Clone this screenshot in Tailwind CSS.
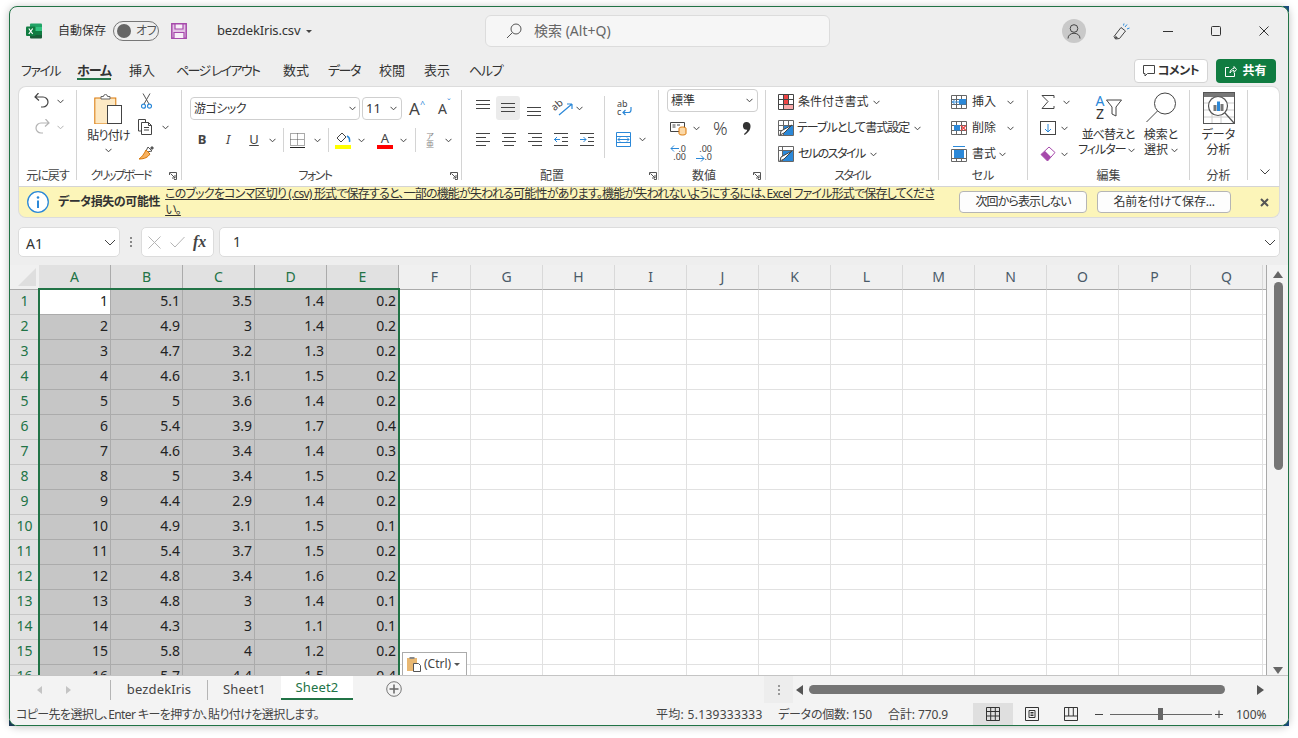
<!DOCTYPE html>
<html lang="ja">
<head>
<meta charset="UTF-8">
<title>bezdekIris.csv - Excel</title>
<script src="https://cdn.jsdelivr.net/npm/@tailwindcss/browser@4"></script>
</head>
<body class="relative w-[1298px] h-[738px] overflow-hidden bg-white text-[#333] text-xs [font-family:'Noto_Sans','Noto_Sans_CJK_JP',sans-serif] [font-feature-settings:'palt']">

<!-- shared small icons -->
<svg class="hidden">
  <symbol id="chev" viewBox="0 0 7 5"><path d="M.5.8 3.500 3.800 6.500.8" fill="none" stroke="#444" stroke-width="1"/></symbol>
  <symbol id="launch" viewBox="0 0 8 8"><path d="M.5 3V.5h7v7H5M1.500 1.500 6 6M6 3v3H3" fill="none" stroke="#555"/></symbol>
</svg>

<!-- wallpaper showing in the window corners -->
<div class="absolute left-[1283px] top-[6px] w-[6px] h-[6px] bg-[#1c4f86]"></div>
<div class="absolute left-[9px] top-[720px] w-[6px] h-[6px] bg-[#1c3f5f]"></div>
<div class="absolute left-[1283px] top-[720px] w-[6px] h-[6px] bg-[#1c4f86]"></div>

<div class="relative ml-[9px] mt-[6px] w-[1280px] h-[720px] border border-[#217346] rounded-lg overflow-hidden bg-[#eeeeee] flex flex-col shadow-[0_1px_8px_rgba(0,0,0,0.25)]">

  <!-- title bar -->
  <div class="h-[48px] shrink-0 flex items-center">
    <div class="w-[475px] shrink-0 flex items-center pl-[16px]">
      <svg class="w-[16px] h-[16px] shrink-0" viewBox="0 0 16 16">
        <path d="M5 .5h10a1 1 0 0 1 1 1V4H4V1.500a1 1 0 0 1 1-1z" fill="#21a366"/>
        <rect x="4" y="4" width="12" height="4" fill="#33c481"/>
        <rect x="4" y="8" width="12" height="4" fill="#107c41"/>
        <path d="M4 12h12v2.500a1 1 0 0 1-1 1H5a1 1 0 0 1-1-1z" fill="#185c37"/>
        <rect x="0" y="3.500" width="9.500" height="9.500" rx="1" fill="#107c41"/>
        <path d="M2.800 5.500 6.700 11M6.700 5.500 2.800 11" stroke="#fff" stroke-width="1.200"/>
      </svg>
      <span class="ml-[16px] text-[#333] whitespace-nowrap">自動保存</span>
      <div class="ml-[7px] w-[46px] h-[20px] rounded-full border border-[#777] flex items-center pl-[3px] shrink-0">
        <div class="w-[14px] h-[14px] rounded-full bg-[#666]"></div>
        <span class="ml-[5px] text-[#555] tracking-[-0.5px]">オフ</span>
      </div>
      <svg class="ml-[12px] w-[16px] h-[16px] shrink-0" viewBox="0 0 16 16">
        <path d="M.8.8h14.400v14.400H.8z" fill="#e4c3e6" stroke="#a64aab" stroke-width="1.500"/>
        <path d="M4 1h8v5H4zM3 15v-5.500h10V15" fill="#f8eff8" stroke="#a64aab" stroke-width="1.200"/>
      </svg>
      <span class="ml-[30px] text-[13px] text-[#333] whitespace-nowrap tracking-[-0.15px]">bezdekIris.csv</span>
      <div class="ml-[6px] w-0 h-0 border-x-[3px] border-x-transparent border-t-[3px] border-t-[#444]"></div>
    </div>
    <div class="w-[345px] h-[32px] shrink-0 bg-[#f6f6f6] border border-[#dcdcdc] rounded-md flex items-center pl-[20px]">
      <svg class="w-[16px] h-[16px] shrink-0" viewBox="0 0 16 16"><circle cx="10" cy="6" r="5" fill="none" stroke="#555"/><path d="M6.300 9.700 1 15" stroke="#555"/></svg>
      <span class="ml-[12px] text-sm text-[#666]">検索 (Alt+Q)</span>
    </div>
    <div class="ml-[232px] w-[24px] h-[24px] shrink-0 rounded-full bg-[#c9c9c9] flex items-center justify-center">
      <svg class="w-[14px] h-[15px]" viewBox="0 0 14 15"><circle cx="7" cy="4.500" r="3.800" fill="none" stroke="#444"/><path d="M1 14.500c0-7 12-7 12 0" fill="none" stroke="#444"/></svg>
    </div>
    <svg class="ml-[27px] w-[17px] h-[17px] shrink-0" viewBox="0 0 17 17">
      <path d="M1 13.500 8 4.500l4.500 3.500-6 7.500-4 .5z" fill="none" stroke="#444"/>
      <path d="M2 16 5 15 2.500 12.500z" fill="#444"/>
      <path d="M12 4 14 1.500M14 6l2.500-1M10.500 2.500 11 .5" stroke="#2b88d8"/>
    </svg>
    <svg class="ml-[33px] w-[10px] h-[10px] shrink-0" viewBox="0 0 10 10"><path d="M0 5.500h10" stroke="#333"/></svg>
    <svg class="ml-[38px] w-[10px] h-[10px] shrink-0" viewBox="0 0 10 10"><rect x=".5" y=".5" width="9" height="9" rx="1" fill="none" stroke="#333"/></svg>
    <svg class="ml-[38px] w-[10px] h-[10px] shrink-0" viewBox="0 0 10 10"><path d="M.5.500l9 9M9.500.500l-9 9" stroke="#333"/></svg>
  </div>

  <!-- ribbon tabs -->
  <div class="h-[31px] shrink-0 flex items-center pl-[11px] pr-[12px] text-[13px] text-[#333] whitespace-nowrap">
    <div class="w-[56px] shrink-0 tracking-[-1.5px]">ファイル</div>
    <div class="w-[52px] shrink-0 font-bold tracking-[-1px]"><span class="relative">ホーム<span class="absolute left-0 right-0 top-[17px] h-[2px] bg-[#217346]"></span></span></div>
    <div class="w-[47px] shrink-0">挿入</div>
    <div class="w-[107px] shrink-0 tracking-[-1.7px]">ページ レイアウト</div>
    <div class="w-[45px] shrink-0">数式</div>
    <div class="w-[51px] shrink-0 tracking-[-1.5px]">データ</div>
    <div class="w-[45px] shrink-0">校閲</div>
    <div class="w-[45px] shrink-0">表示</div>
    <div class="shrink-0 tracking-[-1.3px]">ヘルプ</div>
    <div class="ml-auto w-[74px] h-[24px] bg-white border border-[#d4d4d4] rounded-[4px] flex items-center justify-center font-bold text-xs text-[#333] tracking-[-0.5px]">
      <svg class="w-[12px] h-[12px] mr-[3px]" viewBox="0 0 12 12"><path d="M.5.500h11v8H4.500L2 11V8.500H.5z" fill="none" stroke="#444"/></svg>コメント
    </div>
    <div class="ml-[8px] w-[60px] h-[24px] bg-[#107c41] rounded-[4px] flex items-center justify-center font-bold text-xs text-white">
      <svg class="w-[12px] h-[12px] mr-[5px]" viewBox="0 0 12 12"><path d="M4 2.500H.5v9h9V8M5 8c0-3 2-4.500 4-4.500V1.500l2.500 3-2.500 3V5.500C7 5.500 6 6.500 5 8z" fill="none" stroke="#fff"/></svg>共有
    </div>
  </div>

  <!-- ribbon -->
  <div class="mx-[8px] w-[1262px] h-[100px] shrink-0 bg-white border-x border-t border-[#dcdcdc] rounded-t-lg flex items-start pt-[3px] text-[#333]">

    <!-- undo -->
    <div class="w-[58px] h-[90px] shrink-0 border-r border-[#d4d4d4] flex flex-col">
      <div class="h-[78px] shrink-0 pt-[3px] pl-[15px]">
        <div class="h-[16px] flex items-center">
          <svg class="w-[16px] h-[16px]" viewBox="0 0 16 16"><path d="M4.500 1 1 5l4 3.500M1.500 5H9a5 5 0 0 1 0 10H7" fill="none" stroke="#444" stroke-width="1.200" transform="translate(0 -1)"/></svg>
          <svg class="ml-[7px] w-[7px] h-[5px]"><use href="#chev"/></svg>
        </div>
        <div class="mt-[10px] h-[16px] flex items-center opacity-40">
          <svg class="w-[16px] h-[16px]" viewBox="0 0 16 16"><path d="M11.500 1 15 5l-4 3.500M14.500 5H7a5 5 0 0 0 0 10h2" fill="none" stroke="#444" stroke-width="1.200" transform="translate(0 -1)"/></svg>
          <svg class="ml-[7px] w-[7px] h-[5px]"><use href="#chev"/></svg>
        </div>
      </div>
      <div class="h-[14px] mt-[1px] leading-[14px] text-center whitespace-nowrap text-[#444] tracking-[-1px]">元に戻す</div>
    </div>

    <!-- clipboard -->
    <div class="w-[105px] h-[90px] shrink-0 border-r border-[#d4d4d4] flex flex-col">
      <div class="h-[78px] shrink-0 flex pl-[9px]">
        <div class="w-[45px] shrink-0 flex flex-col items-center pt-[4px]">
          <svg class="w-[30px] h-[30px]" viewBox="0 0 30 30">
            <rect x=".8" y="4" width="21" height="26" fill="#fde9c4" stroke="#d97706"/>
            <path d="M7 5V2.500h2.500a2 2 0 0 1 4 0H16V5z" fill="#fff" stroke="#666"/>
            <rect x="13.500" y="11.500" width="14" height="18" fill="#fff" stroke="#444"/>
          </svg>
          <div class="mt-[4px] whitespace-nowrap tracking-[-0.8px]">貼り付け</div>
          <svg class="mt-[4px] w-[7px] h-[5px]"><use href="#chev"/></svg>
        </div>
        <div class="ml-[7px] shrink-0">
          <svg class="mt-[3px] ml-[3px] w-[11px] h-[16px] block" viewBox="0 0 11 16"><path d="M2 .5 8 11M9 .5 3 11" stroke="#555"/><circle cx="2.500" cy="13.200" r="2" fill="none" stroke="#2b88d8" stroke-width="1.200"/><circle cx="8.500" cy="13.200" r="2" fill="none" stroke="#2b88d8" stroke-width="1.200"/></svg>
          <div class="mt-[10px] flex items-center">
            <svg class="w-[16px] h-[16px] block" viewBox="0 0 16 16"><path d="M3.500 12H.5V.5h7V3M3.500 3.500h7l3 3v9h-10z M10.500 3.500v3h3M6 8.500h5M6 11h5" fill="#fff" stroke="#444"/></svg>
            <svg class="ml-[8px] w-[7px] h-[5px]"><use href="#chev"/></svg>
          </div>
          <svg class="mt-[10px] w-[17px] h-[16px] block" viewBox="0 0 17 16"><path d="M10 2l4 4-5 1-1-1z" fill="#fff" stroke="#555"/><path d="M12 3l2-2 2 2-2 2z" fill="#555"/><path d="M8 5l4 4c-2 3-5 5-11 5 3-2 5-5 7-9z" fill="#f7b15f" stroke="#d97706"/></svg>
        </div>
      </div>
      <div class="h-[14px] mt-[1px] leading-[14px] text-center whitespace-nowrap text-[#444] relative pr-[17px] tracking-[-2px]">クリップボード
        <svg class="absolute right-[4px] top-[3px] w-[8px] h-[8px]"><use href="#launch"/></svg>
      </div>
    </div>

    <!-- font -->
    <div class="w-[280px] h-[90px] shrink-0 border-r border-[#d4d4d4] flex flex-col">
      <div class="h-[78px] shrink-0 pl-[8px] pt-[7px]">
        <div class="flex items-center h-[23px]">
          <div class="w-[170px] h-[23px] border border-[#cfcfcf] rounded-[4px] flex items-center pl-[3px] pr-[3px] justify-between">
            <span class="tracking-[-0.5px]">游ゴシック</span><svg class="w-[7px] h-[5px]"><use href="#chev"/></svg>
          </div>
          <div class="ml-[2px] w-[40px] h-[23px] border border-[#cfcfcf] rounded-[4px] flex items-center pl-[3px] pr-[4px] justify-between">
            <span class="text-[13px]">11</span><svg class="w-[7px] h-[5px]"><use href="#chev"/></svg>
          </div>
          <span class="ml-[7px] text-[17px] leading-none text-[#444] relative">A<span class="absolute left-[11px] top-[-1px] text-[9px] text-[#2b88d8]">^</span></span>
          <span class="ml-[18px] text-[14px] leading-none text-[#444] relative">A<span class="absolute left-[9px] top-[-4px] text-[9px] text-[#2b88d8]">ˇ</span></span>
        </div>
        <div class="mt-[10px] flex items-center h-[20px] -ml-[1px] text-[#444]">
          <span class="w-[26px] text-center font-bold text-[13px]">B</span>
          <span class="w-[26px] text-center italic text-[13px]">I</span>
          <span class="w-[26px] text-center underline text-[13px]">U</span>
          <svg class="w-[7px] h-[5px] ml-[2px]"><use href="#chev"/></svg>
          <div class="ml-[7px] w-px h-[24px] bg-[#d4d4d4]"></div>
          <svg class="ml-[6px] w-[15px] h-[15px]" viewBox="0 0 15 15"><path d="M.5.500h14v12H.5zM7.500.500v12M.5 6.500h14" fill="none" stroke="#555" stroke-dasharray="1 1"/><path d="M0 14.500h15" stroke="#222"/></svg>
          <svg class="w-[7px] h-[5px] ml-[9px]"><use href="#chev"/></svg>
          <div class="ml-[7px] w-px h-[24px] bg-[#d4d4d4]"></div>
          <svg class="ml-[6px] w-[16px] h-[17px]" viewBox="0 0 16 17"><path d="M7 1 2 6l4 4 5-5z" fill="#fff" stroke="#444"/><path d="M12 4c2 1 3 3 2.500 6" fill="none" stroke="#2b88d8" stroke-width="1.500"/><rect y="13" width="16" height="4" fill="#ffff00"/></svg>
          <svg class="w-[7px] h-[5px] ml-[7px]"><use href="#chev"/></svg>
          <div class="ml-[12px] w-[16px] h-[17px] flex flex-col items-center">
            <span class="leading-[13px] text-[13px]">A</span>
            <div class="w-[16px] h-[4px] bg-[#ff0000]"></div>
          </div>
          <svg class="w-[7px] h-[5px] ml-[7px]"><use href="#chev"/></svg>
          <div class="ml-[8px] w-px h-[24px] bg-[#d4d4d4]"></div>
          <div class="ml-[9px] w-[10px] text-center text-[8px] leading-[8px] text-[#888]">ア<br>亜</div>
          <svg class="w-[7px] h-[5px] ml-[10px]"><use href="#chev"/></svg>
        </div>
      </div>
      <div class="h-[14px] mt-[1px] leading-[14px] text-center whitespace-nowrap text-[#444] relative pr-[13px] tracking-[-1.5px]">フォント
        <svg class="absolute right-[3px] top-[3px] w-[8px] h-[8px]"><use href="#launch"/></svg>
      </div>
    </div>

    <!-- alignment -->
    <div class="w-[197px] h-[90px] shrink-0 border-r border-[#d4d4d4] flex flex-col">
      <div class="h-[78px] shrink-0 flex pl-[8px] pt-[6px]">
        <div class="w-[134px] shrink-0">
          <div class="flex items-center h-[24px]">
            <div class="w-[26px] h-[24px] flex justify-center">
              <svg class="w-[14px] h-[14px] mt-[4px]" viewBox="0 0 14 14"><path d="M0 .5h14M0 4.500h14M0 8.500h14" stroke="#444"/></svg>
            </div>
            <div class="w-[24px] h-[24px] flex justify-center rounded-[3px] bg-[#ebebeb]">
              <svg class="w-[14px] h-[14px] mt-[7px]" viewBox="0 0 14 14"><path d="M0 .5h14M0 4.500h14M0 8.500h14" stroke="#444"/></svg>
            </div>
            <div class="w-[28px] h-[24px] flex justify-center">
              <svg class="w-[14px] h-[14px] mt-[11px]" viewBox="0 0 14 14"><path d="M0 .5h14M0 4.500h14M0 8.500h14" stroke="#444"/></svg>
            </div>
            <svg class="ml-[5px] w-[20px] h-[16px] overflow-visible" viewBox="0 0 20 16"><path d="M6 15 19 4M19 4h-5M19 4v5" fill="none" stroke="#2b88d8" stroke-width="1.200"/><text x="0" y="9" font-size="10" fill="#444" transform="rotate(-40 4 8)">ab</text></svg>
            <svg class="ml-[3px] w-[7px] h-[5px]"><use href="#chev"/></svg>
          </div>
          <div class="mt-[8px] flex items-center h-[24px] pl-[6px] gap-[12px]">
            <svg class="w-[14px] h-[14px]" viewBox="0 0 14 14"><path d="M0 .5h14M0 4.500h10M0 8.500h14M0 12.500h10" stroke="#444"/></svg>
            <svg class="w-[14px] h-[14px]" viewBox="0 0 14 14"><path d="M0 .5h14M2 4.500h10M0 8.500h14M2 12.500h10" stroke="#444"/></svg>
            <svg class="w-[14px] h-[14px]" viewBox="0 0 14 14"><path d="M0 .5h14M4 4.500h10M0 8.500h14M4 12.500h10" stroke="#444"/></svg>
            <svg class="w-[14px] h-[14px]" viewBox="0 0 14 14"><path d="M0 .5h14M8 4.500h6M8 8.500h6M0 12.500h14" stroke="#444"/><path d="M6 6.500H0M3 4 .5 6.500 3 9" fill="none" stroke="#2b88d8"/></svg>
            <svg class="w-[14px] h-[14px]" viewBox="0 0 14 14"><path d="M0 .5h14M8 4.500h6M8 8.500h6M0 12.500h14" stroke="#444"/><path d="M0 6.500h6M3.500 4 6 6.500 3.500 9" fill="none" stroke="#2b88d8"/></svg>
          </div>
        </div>
        <div class="w-px h-[62px] bg-[#d4d4d4] shrink-0"></div>
        <div class="ml-[11px]">
          <svg class="mt-[3px] ml-[1px] w-[15px] h-[18px] block overflow-visible" viewBox="0 0 15 18"><text x="0" y="8" font-size="9" fill="#444">ab</text><text x="0" y="16" font-size="9" fill="#444">c</text><path d="M14 8v3a2.500 2.500 0 0 1-2.500 2.500H6M8.500 11 6 13.500 8.500 16" fill="none" stroke="#2b88d8" stroke-width="1.200"/></svg>
          <div class="mt-[15px] flex items-center">
            <svg class="w-[15px] h-[15px]" viewBox="0 0 15 15"><path d="M.5.500h14v14H.5zM.5 4.500h14M.5 10.500h14" fill="none" stroke="#2b88d8"/><path d="M2 7.500h11M4 5.500l-2 2 2 2M11 5.500l2 2-2 2" fill="none" stroke="#2b88d8"/></svg>
            <svg class="ml-[8px] w-[7px] h-[5px]"><use href="#chev"/></svg>
          </div>
        </div>
      </div>
      <div class="h-[14px] mt-[1px] leading-[14px] text-center whitespace-nowrap text-[#444] relative pr-[16px]">配置
        <svg class="absolute right-[1px] top-[3px] w-[8px] h-[8px]"><use href="#launch"/></svg>
      </div>
    </div>

    <!-- number -->
    <div class="w-[107px] h-[90px] shrink-0 border-r border-[#d4d4d4] flex flex-col">
      <div class="h-[78px] shrink-0 pl-[8px]">
        <div class="-mt-[1px] w-[91px] h-[23px] border border-[#cfcfcf] rounded-[4px] flex items-center justify-between pl-[3px] pr-[4px]">
          <span>標準</span><svg class="w-[7px] h-[5px]"><use href="#chev"/></svg>
        </div>
        <div class="mt-[5px] flex items-center h-[22px] pl-[3px]">
          <svg class="w-[17px] h-[16px]" viewBox="0 0 17 16"><path d="M.5 2.500h14v9H.5z" fill="none" stroke="#444"/><path d="M2.500 5h3M2.500 7h3M7 5h3" stroke="#444"/><path d="M9 8.500c0-2 7-2 7 0v5c0 2-7 2-7 0z" fill="#fcd9a8" stroke="#d97706"/></svg>
          <svg class="ml-[6px] w-[7px] h-[5px]"><use href="#chev"/></svg>
          <span class="ml-[13px] text-[18px] leading-none text-[#444] font-light">%</span>
          <svg class="ml-[14px] w-[9px] h-[13px]" viewBox="0 0 9 13"><path d="M4.500 0a4 4 0 0 1 4 4.500C8.500 8 6 11 2.500 13L2 12c2-1.500 3-3 3.200-4.200A3.800 3.800 0 1 1 4.500 0z" fill="#333"/></svg>
        </div>
        <div class="mt-[3px] flex items-center h-[22px] pl-[3px] gap-[10px] text-[9px] leading-[9px] text-[#444]">
          <div class="w-[16px] relative h-[18px] text-right">
            <div>.0</div><div class="mt-[-1px]">.00</div>
            <svg class="absolute left-0 top-[1px] w-[9px] h-[7px]" viewBox="0 0 9 7"><path d="M9 3.500H1M4 .5 1 3.500 4 6.500" fill="none" stroke="#2b88d8"/></svg>
          </div>
          <div class="w-[16px] relative h-[18px] text-right">
            <div>.00</div><div class="mt-[-1px]">.0</div>
            <svg class="absolute left-0 bottom-[0px] w-[9px] h-[7px]" viewBox="0 0 9 7"><path d="M0 3.500h8M5 .5l3 3-3 3" fill="none" stroke="#2b88d8"/></svg>
          </div>
        </div>
      </div>
      <div class="h-[14px] mt-[1px] leading-[14px] text-center whitespace-nowrap text-[#444] relative pr-[16px]">数値
        <svg class="absolute right-[4px] top-[3px] w-[8px] h-[8px]"><use href="#launch"/></svg>
      </div>
    </div>

    <!-- styles -->
    <div class="w-[173px] h-[90px] shrink-0 border-r border-[#d4d4d4] flex flex-col">
      <div class="h-[78px] shrink-0 pl-[12px] -mt-[1px] mb-[1px]">
        <div class="h-[26px] flex items-center">
          <svg class="w-[16px] h-[16px] shrink-0" viewBox="0 0 16 16"><path d="M.5.500h15v15H.5zM.5 5.500h15M.5 10.500h15M5.500.500v15M10.500.500v15" fill="none" stroke="#444"/><rect x="6" y="1" width="4" height="4" fill="#ef4444"/><rect x="6" y="11" width="9" height="4" fill="#f9a8a8"/><rect x="6" y="6" width="4" height="4" fill="#ef4444"/></svg>
          <span class="ml-[4px] whitespace-nowrap">条件付き書式</span>
          <svg class="ml-[4px] w-[7px] h-[5px]"><use href="#chev"/></svg>
        </div>
        <div class="h-[26px] flex items-center">
          <svg class="w-[16px] h-[16px] shrink-0" viewBox="0 0 16 16"><path d="M.5.500h15v15H.5zM.5 5.500h15M.5 10.500h15M5.500.500v15M10.500.500v15" fill="none" stroke="#666"/><rect x="6" y="6" width="9" height="9" fill="#2b88d8"/><path d="M14 5 6 13l-4 2 1-4z" fill="#fff" stroke="#444"/></svg>
          <span class="ml-[3px] whitespace-nowrap tracking-[-1px]">テーブルとして書式設定</span>
          <svg class="ml-[5px] w-[7px] h-[5px]"><use href="#chev"/></svg>
        </div>
        <div class="h-[26px] flex items-center">
          <svg class="w-[16px] h-[16px] shrink-0" viewBox="0 0 16 16"><path d="M.5.500h15v15H.5zM.5 4.500h15M4.500.500v15" fill="none" stroke="#666"/><rect x="5" y="5" width="10" height="10" fill="#2b88d8"/><path d="M14 5 6 13l-4 2 1-4z" fill="#fff" stroke="#444"/></svg>
          <span class="ml-[4px] whitespace-nowrap tracking-[-1.5px]">セルのスタイル</span>
          <svg class="ml-[5px] w-[7px] h-[5px]"><use href="#chev"/></svg>
        </div>
      </div>
      <div class="h-[14px] mt-[1px] leading-[14px] text-center whitespace-nowrap text-[#444] tracking-[-2px]">スタイル</div>
    </div>

    <!-- cells -->
    <div class="w-[89px] h-[90px] shrink-0 border-r border-[#d4d4d4] flex flex-col">
      <div class="h-[78px] shrink-0 pl-[12px] -mt-[1px] mb-[1px]">
        <div class="h-[26px] flex items-center">
          <svg class="w-[16px] h-[14px] shrink-0" viewBox="0 0 16 14"><path d="M.5.500h15v13H.5zM.5 4.500h15M.5 9.500h15M5.500.500v13M10.500.500v13" fill="none" stroke="#666"/><rect x="8" y="4" width="7" height="5.500" fill="#2b88d8"/><path d="M9 7H1M4 4.500 1.500 7 4 9.500" fill="none" stroke="#2b88d8"/></svg>
          <span class="ml-[5px] whitespace-nowrap">挿入</span>
          <svg class="ml-[11px] w-[7px] h-[5px]"><use href="#chev"/></svg>
        </div>
        <div class="h-[26px] flex items-center">
          <svg class="w-[16px] h-[14px] shrink-0" viewBox="0 0 16 14"><path d="M.5.500h15v13H.5zM.5 4.500h15M.5 9.500h15M5.500.500v13M10.500.500v13" fill="none" stroke="#666"/><rect x="3" y="4" width="6" height="5.500" fill="#2b88d8"/><path d="M10 4.500l5 5M15 4.500l-5 5" stroke="#ef4444" stroke-width="1.200"/></svg>
          <span class="ml-[5px] whitespace-nowrap">削除</span>
          <svg class="ml-[11px] w-[7px] h-[5px]"><use href="#chev"/></svg>
        </div>
        <div class="h-[26px] flex items-center">
          <svg class="w-[16px] h-[16px] shrink-0 overflow-visible" viewBox="0 0 16 16"><path d="M.5 3.500h15v12H.5zM.5 12.500h15M5.500 12.500v3M10.500 12.500v3" fill="none" stroke="#666"/><rect x="3" y="4" width="10" height="8" fill="#2b88d8"/><path d="M2 .5h12" stroke="#2b88d8"/></svg>
          <span class="ml-[5px] whitespace-nowrap">書式</span>
          <svg class="ml-[3px] w-[7px] h-[5px]"><use href="#chev"/></svg>
        </div>
      </div>
      <div class="h-[14px] mt-[1px] leading-[14px] text-center whitespace-nowrap text-[#444]">セル</div>
    </div>

    <!-- editing -->
    <div class="w-[162px] h-[90px] shrink-0 border-r border-[#d4d4d4] flex flex-col">
      <div class="h-[78px] shrink-0 flex pl-[12px] -mt-[1px] mb-[1px]">
        <div class="w-[37px] shrink-0">
          <div class="h-[26px] flex items-center">
            <svg class="w-[16px] h-[14px]" viewBox="0 0 16 14"><path d="M14 3V.5H2l6 6-6 7h12V11" fill="none" stroke="#444"/></svg>
            <svg class="ml-[7px] w-[7px] h-[5px]"><use href="#chev"/></svg>
          </div>
          <div class="h-[26px] flex items-center">
            <svg class="w-[16px] h-[14px]" viewBox="0 0 16 14"><rect x=".5" y=".5" width="15" height="13" fill="none" stroke="#444"/><path d="M8 3v8M5 8l3 3 3-3" fill="none" stroke="#2b88d8"/></svg>
            <svg class="ml-[5px] w-[7px] h-[5px]"><use href="#chev"/></svg>
          </div>
          <div class="h-[26px] flex items-center">
            <svg class="w-[16px] h-[16px]" viewBox="0 0 16 16"><path d="M1 8.500 9 1l6 5.500-7.500 8.500z" fill="#fff" stroke="#a64aab"/><path d="M1 8.500 5 5l6 6-3.500 4z" fill="#a64aab"/></svg>
            <svg class="ml-[5px] w-[7px] h-[5px]"><use href="#chev"/></svg>
          </div>
        </div>
        <div class="w-[62px] shrink-0 flex flex-col items-center">
          <div class="h-[30px] mt-[5px] flex items-start">
            <div class="text-[14px] leading-[13px] text-center w-[12px]"><span class="text-[#2b88d8]">A</span><br>Z</div>
            <svg class="w-[16px] h-[18px] mt-[5px]" viewBox="0 0 16 18"><path d="M.5 1h15L10 8v9l-4-2V8z" fill="none" stroke="#444"/></svg>
          </div>
          <div class="mt-[3px] leading-[15px] whitespace-nowrap text-center tracking-[-1px]">並べ替えと<br><span class="-ml-[3px]">フィルター</span> <svg class="inline w-[7px] h-[5px]"><use href="#chev"/></svg></div>
        </div>
        <div class="w-[44px] shrink-0 flex flex-col items-center">
          <svg class="mt-[3px] w-[31px] h-[31px]" viewBox="0 0 31 31"><circle cx="19" cy="11.500" r="10.500" fill="none" stroke="#444"/><path d="M11.500 19 .5 30" stroke="#444"/></svg>
          <div class="mt-[4px] leading-[15px] whitespace-nowrap text-center">検索と<br>選択 <svg class="inline w-[7px] h-[5px]"><use href="#chev"/></svg></div>
        </div>
      </div>
      <div class="h-[14px] mt-[1px] leading-[14px] text-center whitespace-nowrap text-[#444]">編集</div>
    </div>

    <!-- analysis -->
    <div class="w-[58px] h-[90px] shrink-0 border-r border-[#d4d4d4] flex flex-col">
      <div class="h-[78px] shrink-0 flex flex-col items-center">
        <svg class="mt-[2px] w-[32px] h-[32px]" viewBox="0 0 32 32">
          <rect x=".5" y=".5" width="31" height="31" fill="#fff" stroke="#555"/>
          <rect x="1" y="1" width="30" height="4" fill="#777"/>
          <path d="M1 11h30M1 18h30M1 25h30M9 5v26M18 5v26" stroke="#ccc"/>
          <circle cx="15" cy="14" r="9.500" fill="#fff" stroke="#555" stroke-width="1.200"/>
          <rect x="10.500" y="13" width="3" height="6" fill="#777"/><rect x="14" y="9.500" width="3" height="9.500" fill="#2b88d8"/><rect x="17.500" y="12" width="3" height="7" fill="#777"/>
          <path d="M22 21l9 10" stroke="#555" stroke-width="1.200"/>
        </svg>
        <div class="mt-[3px] leading-[15px] text-center">データ<br>分析</div>
      </div>
      <div class="h-[14px] mt-[1px] leading-[14px] text-center whitespace-nowrap text-[#444]">分析</div>
    </div>

    <div class="flex-1 h-[90px] flex items-end justify-center pb-[5px] pl-[2px]">
      <svg class="w-[10px] h-[6px]" viewBox="0 0 10 6"><path d="M.5.500l4.500 4.500L9.500.500" fill="none" stroke="#444"/></svg>
    </div>
  </div>

  <!-- message bar -->
  <div class="mx-[8px] w-[1262px] h-[32px] shrink-0 bg-[#fcf5b9] border border-[#dcdcdc] border-t-[#d4d4d4] rounded-b-lg flex items-center pl-[8px] text-[#333]">
    <svg class="w-[22px] h-[22px] shrink-0" viewBox="0 0 22 22"><circle cx="11" cy="11" r="10.300" fill="#fff" stroke="#2b88d8" stroke-width="1.300"/><rect x="10" y="9.500" width="2" height="7.500" fill="#2b88d8"/><circle cx="11" cy="6.500" r="1.300" fill="#2b88d8"/></svg>
    <span class="ml-[9px] font-bold whitespace-nowrap tracking-[-0.4px]">データ損失の可能性</span>
    <p class="ml-[5px] w-[775px] shrink-0 leading-[16px] underline whitespace-nowrap tracking-[-0.8px]">このブックをコンマ区切り (.csv) 形式で保存すると、一部の機能が失われる可能性があります。機能が失われないようにするには、Excel ファイル形式で保存してくださ<br>い。</p>
    <div class="ml-[19px] w-[128px] h-[22px] shrink-0 bg-[#fdfdfd] border border-[#b5b5b5] rounded-[4px] flex items-center justify-center tracking-[-0.9px]">次回から表示しない</div>
    <div class="ml-[10px] w-[134px] h-[22px] shrink-0 bg-[#fdfdfd] border border-[#b5b5b5] rounded-[4px] flex items-center justify-center tracking-[-0.2px]">名前を付けて保存...</div>
    <svg class="ml-[29px] w-[9px] h-[9px] shrink-0" viewBox="0 0 9 9"><path d="M1 1l7 7M8 1 1 8" stroke="#555" stroke-width="2"/></svg>
  </div>

  <!-- formula bar -->
  <div class="mt-[9px] mx-[8px] h-[30px] shrink-0 flex items-stretch text-[#333]">
    <div class="w-[102px] bg-white border border-[#dcdcdc] rounded-[5px] flex items-center justify-between pl-[7px] pr-[3px] shrink-0">
      <span class="text-sm mt-[3px]">A1</span>
      <svg class="w-[12px] h-[7px]" viewBox="0 0 12 7"><path d="M1 1l5 5 5-5" fill="none" stroke="#444"/></svg>
    </div>
    <div class="w-[21px] flex flex-col items-center justify-center gap-[2px] shrink-0">
      <div class="w-[2px] h-[2px] bg-[#888]"></div><div class="w-[2px] h-[2px] bg-[#888]"></div><div class="w-[2px] h-[2px] bg-[#888]"></div>
    </div>
    <div class="w-[73px] bg-white border border-[#dcdcdc] rounded-[5px] flex items-center pl-[6px] shrink-0">
      <svg class="w-[13px] h-[13px]" viewBox="0 0 13 13"><path d="M.5.500l12 12M12.500.500l-12 12" stroke="#b5b5b5"/></svg>
      <svg class="ml-[9px] w-[15px] h-[12px]" viewBox="0 0 15 12"><path d="M.5 6.500 5 11 14.500 1" fill="none" stroke="#b5b5b5"/></svg>
      <span class="ml-[8px] [font-family:'Liberation_Serif',serif] italic font-bold text-[16px] text-[#444]">fx</span>
    </div>
    <div class="ml-[5px] flex-1 bg-white border border-[#dcdcdc] rounded-[5px] flex items-center justify-between pl-[13px] pr-[3px]">
      <span class="text-sm">1</span>
      <svg class="w-[12px] h-[7px]" viewBox="0 0 12 7"><path d="M1 1l5 5 5-5" fill="none" stroke="#444"/></svg>
    </div>
  </div>

  <!-- sheet area -->
  <div class="mt-[8px] h-[410px] shrink-0 flex bg-[#f3f3f3]">
    <div class="w-[1257px] shrink-0 relative overflow-hidden border-r border-[#a9a9a9]">
      <div id="sheet" class="grid grid-cols-[29px_repeat(17,72px)_1fr] auto-rows-[25px] bg-white text-sm text-[#222] [font-feature-settings:normal]"></div>
      <!-- selection outline -->
      <div class="absolute left-[28px] top-[23px] w-[362px] h-[420px] border-2 border-[#217346]"></div>
      <!-- paste options -->
      <div class="absolute left-[392px] top-[387px] w-[65px] h-[24px] bg-white border border-[#ababab] flex items-center pl-[3px] text-[#444]">
        <svg class="w-[16px] h-[16px] shrink-0" viewBox="0 0 16 16"><rect x="1" y="2" width="10" height="13" fill="#e9b872"/><path d="M3.500 3V1h5v2z" fill="#888"/><path d="M7.500 7.500h5l2 2v6h-7z" fill="#fff" stroke="#555"/></svg>
        <span class="ml-[2px] text-xs">(Ctrl)</span>
        <div class="ml-[3px] w-0 h-0 border-x-[3px] border-x-transparent border-t-[3px] border-t-[#555]"></div>
      </div>
    </div>
    <div class="flex-1 flex flex-col items-center pt-[6px] pb-[1px] pl-[1px]">
      <div class="w-0 h-0 border-x-[5px] border-x-transparent border-b-[7px] border-b-[#666]"></div>
      <div class="mt-[4px] w-[9px] h-[188px] rounded-full bg-[#757575]"></div>
      <div class="mt-auto w-0 h-0 border-x-[5px] border-x-transparent border-t-[7px] border-t-[#666]"></div>
    </div>
  </div>

  <!-- sheet tabs -->
  <div class="h-[28px] shrink-0 bg-[#f3f3f3] border-t border-[#c4c4c4] flex items-start text-[13px] text-[#444] tracking-[0.15px]">
    <div class="w-[100px] h-[24px] shrink-0 flex items-center pl-[27px] gap-[24px] pt-[4px]">
      <div class="w-0 h-0 border-y-[4px] border-y-transparent border-r-[5px] border-r-[#c4c4c4]"></div>
      <div class="w-0 h-0 border-y-[4px] border-y-transparent border-l-[5px] border-l-[#c4c4c4]"></div>
    </div>
    <div class="mt-[4px] h-[20px] w-[97px] shrink-0 border-l border-[#b5b5b5] flex items-center justify-center">bezdekIris</div>
    <div class="mt-[4px] h-[20px] w-[74px] shrink-0 border-l border-[#b5b5b5] flex items-center justify-center">Sheet1</div>
    <div class="h-[24px] w-[72px] shrink-0 pt-[2px] bg-white border-b-2 border-[#217346] text-[#217346] flex items-center justify-center">Sheet2</div>
    <svg class="ml-[33px] mt-[5px] w-[16px] h-[16px] shrink-0" viewBox="0 0 16 16"><circle cx="8" cy="8" r="7.300" fill="none" stroke="#777"/><path d="M8 3.500v9M3.500 8h9" stroke="#666" stroke-width="1.500"/></svg>
    <div class="ml-[362px] w-[29px] h-[27px] shrink-0 bg-[#ededed] flex flex-col items-center justify-center gap-[2px]">
      <div class="w-[2px] h-[2px] bg-[#999]"></div><div class="w-[2px] h-[2px] bg-[#999]"></div><div class="w-[2px] h-[2px] bg-[#999]"></div>
    </div>
    <div class="ml-[3px] mt-[9px] w-0 h-0 border-y-[5px] border-y-transparent border-r-[7px] border-r-[#555] shrink-0"></div>
    <div class="ml-[6px] mt-[9px] w-[416px] h-[9px] rounded-full bg-[#757575] shrink-0"></div>
    <div class="ml-[32px] mt-[9px] w-0 h-0 border-y-[5px] border-y-transparent border-l-[7px] border-l-[#555] shrink-0"></div>
  </div>

  <!-- status bar -->
  <div class="h-[22px] shrink-0 bg-[#f3f3f3] flex items-center pl-[6px] text-[#444] whitespace-nowrap">
    <span class="w-[640px] shrink-0 mt-[2px] tracking-[-0.6px]">コピー先を選択し、Enter キーを押すか、貼り付けを選択します。</span>
    <span class="w-[122px] shrink-0 mt-[2px] tracking-[0.3px]">平均: 5.139333333</span>
    <span class="w-[110px] shrink-0 mt-[2px] tracking-[-0.2px]">データの個数: 150</span>
    <span class="w-[85px] shrink-0 mt-[2px] tracking-[-0.1px]">合計: 770.9</span>
    <div class="w-[40px] h-[22px] shrink-0 bg-[#dfdfdf] flex items-center justify-center">
      <svg class="w-[14px] h-[14px]" viewBox="0 0 14 14"><path d="M.5.500h13v13H.5zM.5 4.500h13M.5 9h13M4.700.500v13M9.300.500v13" fill="none" stroke="#333"/></svg>
    </div>
    <div class="w-[38px] h-[22px] shrink-0 flex items-center justify-center">
      <svg class="w-[14px] h-[14px]" viewBox="0 0 14 14"><path d="M.5.500h13v13H.5zM4 3.500h6v7H4zM5.500 5.500h3M5.500 7h3M5.500 8.500h3" fill="none" stroke="#333"/></svg>
    </div>
    <div class="w-[40px] h-[22px] shrink-0 flex items-center justify-center">
      <svg class="w-[14px] h-[14px]" viewBox="0 0 14 14"><path d="M.5.500h13v13H.5zM.5 9h13M4.700.500V9M9.300.500V9" fill="none" stroke="#333"/></svg>
    </div>
    <svg class="ml-[4px] w-[8px] h-[8px] shrink-0" viewBox="0 0 8 8"><path d="M0 4.500h8" stroke="#444"/></svg>
    <div class="ml-[7px] w-[102px] h-[12px] shrink-0 flex items-center justify-center relative">
      <div class="w-full h-px bg-[#666]"></div>
      <div class="absolute left-[48px] top-0 w-[5px] h-[12px] bg-[#666]"></div>
    </div>
    <svg class="ml-[3px] w-[8px] h-[8px] shrink-0" viewBox="0 0 8 8"><path d="M0 4.500h8M4 .5v8" stroke="#444"/></svg>
    <span class="ml-[13px] mt-[2px]">100%</span>
  </div>
</div>

<script>
  // build the grid from the csv rows
  const cols = "ABCDEFGHIJKLMNOPQ".split("");
  const rows = [
    [1, 5.1, 3.5, 1.4, 0.2], [2, 4.9, 3, 1.4, 0.2], [3, 4.7, 3.2, 1.3, 0.2], [4, 4.6, 3.1, 1.5, 0.2],
    [5, 5, 3.6, 1.4, 0.2], [6, 5.4, 3.9, 1.7, 0.4], [7, 4.6, 3.4, 1.4, 0.3], [8, 5, 3.4, 1.5, 0.2],
    [9, 4.4, 2.9, 1.4, 0.2], [10, 4.9, 3.1, 1.5, 0.1], [11, 5.4, 3.7, 1.5, 0.2], [12, 4.8, 3.4, 1.6, 0.2],
    [13, 4.8, 3, 1.4, 0.1], [14, 4.3, 3, 1.1, 0.1], [15, 5.8, 4, 1.2, 0.2], [16, 5.7, 4.4, 1.5, 0.4]
  ];
  const base = "flex items-center overflow-hidden ";
  let html = `<div class="bg-[#f0f0f0] border-b border-[#ababab] flex items-end justify-end pr-[3px] pb-[3px]">
    <div class="w-[18px] h-[18px] bg-[#dedede] [clip-path:polygon(100%_0,100%_100%,0_100%)]"></div></div>`;
  cols.forEach((c, i) => {
    const tone = i < 5 ? "bg-[#e1e1e1] text-[#217346] border-[#ababab] " : "bg-[#f0f0f0] text-[#4a5a68] border-[#d9d9d9] ";
    html += `<div class="${base}justify-center border-r border-b border-b-[#ababab] ${tone}">${c}</div>`;
  });
  html += `<div class="bg-[#f0f0f0] border-b border-[#ababab]"></div>`;
  rows.forEach((row, r) => {
    html += `<div class="${base}justify-center pb-[2px] bg-[#e1e1e1] text-[#217346] border-b border-[#c8c8c8]">${r + 1}</div>`;
    cols.forEach((c, i) => {
      if (i >= 5) {
        html += `<div class="border-r border-b border-[#e1e1e1]"></div>`;
        return;
      }
      const fill = r === 0 && i === 0 ? "bg-white " : "bg-[#c6c6c6] ";
      html += `<div class="${base}justify-end pr-[2px] pb-[2px] border-r border-b border-[#ababab] ${fill}">${row[i]}</div>`;
    });
    html += `<div class="border-b border-[#e1e1e1]"></div>`;
  });
  document.getElementById("sheet").innerHTML = html;
</script>
</body>
</html>
